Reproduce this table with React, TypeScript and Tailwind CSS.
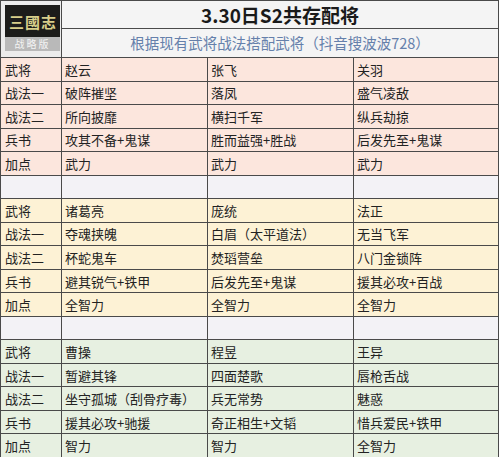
import React from "react";

type Section = { bg: string; rows: string[][] };

const labels = ["武将", "战法一", "战法二", "兵书", "加点"];

const sections: Section[] = [
  {
    bg: "bg-[#fce6dd]",
    rows: [
      ["赵云", "张飞", "关羽"],
      ["破阵摧坚", "落凤", "盛气凌敌"],
      ["所向披靡", "横扫千军", "纵兵劫掠"],
      ["攻其不备+鬼谋", "胜而益强+胜战", "后发先至+鬼谋"],
      ["武力", "武力", "武力"],
    ],
  },
  {
    bg: "bg-[#fdf2d5]",
    rows: [
      ["诸葛亮", "庞统", "法正"],
      ["夺魂挟魄", "白眉（太平道法）", "无当飞军"],
      ["杯蛇鬼车", "焚瑫营垒", "八门金锁阵"],
      ["避其锐气+铁甲", "后发先至+鬼谋", "援其必攻+百战"],
      ["全智力", "全智力", "全智力"],
    ],
  },
  {
    bg: "bg-[#e7f0e1]",
    rows: [
      ["曹操", "程昱", "王异"],
      ["暂避其锋", "四面楚歌", "唇枪舌战"],
      ["坐守孤城（刮骨疗毒）", "兵无常势", "魅惑"],
      ["援其必攻+驰援", "奇正相生+文韬", "惜兵爱民+铁甲"],
      ["智力", "智力", "全智力"],
    ],
  },
];

function Cell({ bg, children, first }: { bg: string; children?: React.ReactNode; first?: boolean }) {
  return (
    <div className={`${bg} flex items-center ${first ? "pl-[4px]" : "pl-[3px]"} text-[13px] text-[#222] leading-none whitespace-nowrap overflow-hidden`}>
      {children}
    </div>
  );
}

function EmptyRow() {
  return (
    <>
      <div className="bg-[#f3f2f6]" />
      <div className="bg-[#f3f2f6]" />
      <div className="bg-[#f3f2f6]" />
      <div className="bg-[#f3f2f6]" />
    </>
  );
}

export default function App() {
  return (
    <div className="w-[500px] h-[457px] bg-white" style={{ fontFamily: '"Noto Sans CJK SC", "Noto Sans", sans-serif' }}>
      <div className="w-[499px] h-[457px] bg-[#4a4a4a] p-px pb-0 grid grid-cols-[60px_145px_145px_1fr] grid-rows-[27px_28px_repeat(17,1fr)] gap-px">
        {/* logo */}
        <div className="row-span-2 bg-[#ececec] flex flex-col items-start pl-[4px] pt-[4px]">
          <div className="w-[55px] h-[32px] bg-[#1c1c1a] flex items-center justify-center gap-[1px] text-[15px] font-bold text-[#d8cf8a] leading-none">
            <span>三</span>
            <span>國</span>
            <span>志</span>
          </div>
          <div className="w-[55px] h-[14px] bg-[#b9b9b9] flex items-center justify-center text-[10px] text-[#f4f4f4] leading-none tracking-[2px]">
            战略版
          </div>
        </div>
        <div className="col-span-3 bg-[#f4f4f4] flex items-center justify-center text-[19px] font-bold text-[#1a1a1a] leading-none">
          3.30日S2共存配将
        </div>
        <div className="col-span-3 bg-[#f4f4f4] flex items-center justify-center text-[14.5px] text-[#6580ab] leading-none">
          根据现有武将战法搭配武将（抖音搜波波728）
        </div>

        {sections.map((s, si) => (
          <React.Fragment key={si}>
            {si > 0 && <EmptyRow />}
            {s.rows.map((r, ri) => (
              <React.Fragment key={ri}>
                <Cell bg={s.bg} first>{labels[ri]}</Cell>
                {r.map((v, ci) => (
                  <Cell key={ci} bg={s.bg}>{v}</Cell>
                ))}
              </React.Fragment>
            ))}
          </React.Fragment>
        ))}
      </div>
    </div>
  );
}
